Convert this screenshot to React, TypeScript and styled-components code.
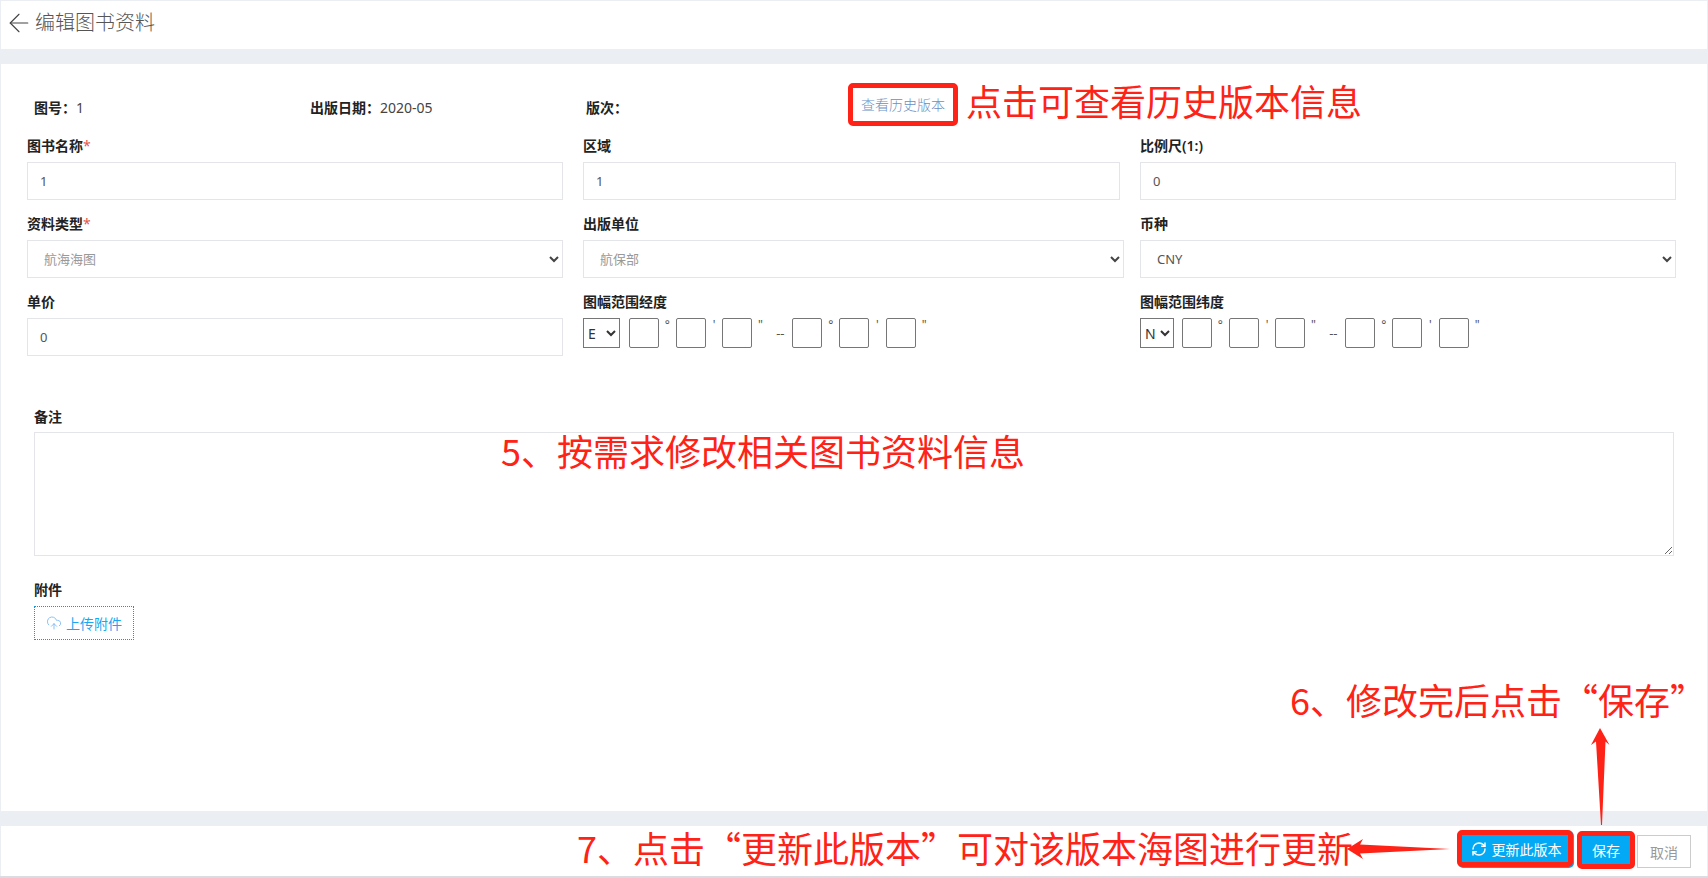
import React, { FC } from "react";
import styled, { createGlobalStyle } from "styled-components";
import { ArrowLeft, CloudUpload, RefreshCw } from "lucide-react";

const GlobalStyle = createGlobalStyle`
  html, body {
    margin: 0;
    padding: 0;
    background: #ebeef3;
  }
  * {
    box-sizing: border-box;
  }
`;

const FONT = `"Noto Sans", "Noto Sans CJK SC", sans-serif`;
const RED = "#ff2216";
const BLUE = "#03a9f4";

const CoordGroup: FC<{ hemi: string; selectWidth: number; selectGap: number }> = ({
  hemi,
  selectWidth,
  selectGap,
}) => (
  <CoordRow>
    <CoordSelect defaultValue={hemi} $width={selectWidth} $gap={selectGap}>
      <option>{hemi}</option>
    </CoordSelect>
    <CoordInput />
    <Unit>°</Unit>
    <CoordInput />
    <Unit>'</Unit>
    <CoordInput />
    <Second>"</Second>
    <Dash>--</Dash>
    <CoordInput />
    <Unit>°</Unit>
    <CoordInput />
    <Unit>'</Unit>
    <CoordInput />
    <Unit>"</Unit>
  </CoordRow>
);

const App: FC = () => (
  <Page>
    <GlobalStyle />
    <Header>
      <ArrowLeft size={30} strokeWidth={0.9} color="#444" />
      <Title>编辑图书资料</Title>
    </Header>

    <Card>
      <InfoRow>
        <Info>
          <b>图号：</b>1
        </Info>
        <Info>
          <b>出版日期：</b>2020-05
        </Info>
        <Info>
          <b>版次：</b>
        </Info>
        <HistoryLink>查看历史版本</HistoryLink>
      </InfoRow>

      <FormGrid>
        <Field>
          <Label>
            图书名称<Star>*</Star>
          </Label>
          <TextInput defaultValue="1" />
        </Field>
        <Field>
          <Label>区域</Label>
          <TextInput defaultValue="1" />
        </Field>
        <Field>
          <Label>比例尺(1:)</Label>
          <TextInput defaultValue="0" />
        </Field>

        <Field>
          <Label>
            资料类型<Star>*</Star>
          </Label>
          <Select $muted>
            <option>航海海图</option>
          </Select>
        </Field>
        <Field>
          <Label>出版单位</Label>
          <Select $muted $overhang>
            <option>航保部</option>
          </Select>
        </Field>
        <Field>
          <Label>币种</Label>
          <Select>
            <option>CNY</option>
          </Select>
        </Field>

        <Field>
          <Label>单价</Label>
          <TextInput defaultValue="0" />
        </Field>
        <Field>
          <Label>图幅范围经度</Label>
          <CoordGroup hemi="E" selectWidth={37} selectGap={9} />
        </Field>
        <Field>
          <Label>图幅范围纬度</Label>
          <CoordGroup hemi="N" selectWidth={34} selectGap={8} />
        </Field>
      </FormGrid>

      <NoteSection>
        <Label>备注</Label>
        <NoteArea />
      </NoteSection>

      <AttachSection>
        <AttachLabel>附件</AttachLabel>
        <UploadButton>
          <CloudUpload size={16} strokeWidth={1.2} color="#6fb1f5" />
          上传附件
        </UploadButton>
      </AttachSection>
    </Card>

    <Footer>
      <UpdateButton>
        <RefreshCw size={16} strokeWidth={2.2} />
        更新此版本
      </UpdateButton>
      <SaveButton>保存</SaveButton>
      <CancelButton>取消</CancelButton>
    </Footer>

    <NoteHistory>点击可查看历史版本信息</NoteHistory>
    <NoteEdit>5、按需求修改相关图书资料信息</NoteEdit>
    <NoteSave>6、修改完后点击“保存”</NoteSave>
    <NoteUpdate>7、点击“更新此版本”可对该版本海图进行更新</NoteUpdate>

    <UpArrow width="24" height="100" viewBox="0 0 24 100">
      <polygon points="11,0 20.5,17 16.5,13.5 13,97 12,97 7,13.5 2,17" fill={RED} />
    </UpArrow>
    <LeftArrow width="106" height="24" viewBox="0 0 106 24">
      <polygon points="0,12 16,2 13,7.5 103,12 13,16.5 16,22" fill={RED} />
    </LeftArrow>
  </Page>
);

const Page = styled.div`
  position: relative;
  width: 1708px;
  height: 878px;
  padding: 1px 1px 2px;
  display: flex;
  flex-direction: column;
  overflow: hidden;
  font-family: ${FONT};
  font-size: 13px;
  color: #333;
  background: #ebeef3;
  border-bottom: 2px solid #d9dde1;
`;

const Header = styled.header`
  height: 48px;
  flex: none;
  display: flex;
  align-items: center;
  padding: 0 0 4px 3px;
  background: #fff;
`;

const Title = styled.h1`
  margin: 0 0 0 1px;
  font-size: 20px;
  font-weight: 300;
  line-height: 1;
  color: #555;
`;

const Card = styled.main`
  height: 747px;
  flex: none;
  margin-top: 15px;
  padding: 32px 31px 0 26px;
  background: #fff;
`;

const InfoRow = styled.div`
  height: 22px;
  padding-left: 7px;
  display: grid;
  grid-template-columns: 276px 276px 262px auto;
  grid-auto-rows: 22px;
  align-items: center;
  justify-content: start;
`;

const Info = styled.div`
  font-size: 14px;
  color: #444;

  b {
    font-weight: 600;
    color: #222;
  }
`;

const HistoryLink = styled.a`
  width: 110px;
  height: 43px;
  margin-bottom: 6px;
  display: flex;
  align-items: center;
  justify-content: center;
  font-size: 14px;
  font-weight: 300;
  color: #6a90c2;
  border: 5px solid ${RED};
  border-radius: 5px;
`;

const FormGrid = styled.div`
  margin-top: 17px;
  display: grid;
  grid-template-columns: 536px 537px 536px;
  column-gap: 20px;
  row-gap: 13px;
`;

const Field = styled.div`
  display: flex;
  flex-direction: column;
  min-width: 0;
`;

const Label = styled.label`
  height: 22px;
  margin-bottom: 5px;
  line-height: 22px;
  font-size: 14px;
  font-weight: 600;
  color: #222;
`;

const Star = styled.span`
  color: #e2574c;
  font-weight: 400;
`;

const TextInput = styled.input`
  width: 100%;
  height: 38px;
  padding: 0 12px;
  border: 1px solid #e3e5e8;
  outline: none;
  font-family: ${FONT};
  font-size: 13px;
  color: #555;
  background: #fff;
`;

const Select = styled.select<{ $muted?: boolean; $overhang?: boolean }>`
  width: ${(p) => (p.$overhang ? "541px" : "100%")};
  height: 38px;
  padding: 0 12px;
  border: 1px solid #e3e5e8;
  outline: none;
  font-family: ${FONT};
  font-size: 13px;
  color: #444;
  -webkit-text-fill-color: ${(p) => (p.$muted ? "#999" : "#555")};
  background: #fff;
`;

const CoordRow = styled.div`
  display: flex;
  align-items: flex-start;
  height: 38px;
`;

const CoordSelect = styled.select<{ $width: number; $gap: number }>`
  width: ${(p) => p.$width}px;
  height: 30px;
  margin-right: ${(p) => p.$gap}px;
  padding: 0;
  border: 1px solid #767676;
  border-radius: 0;
  font-family: ${FONT};
  font-size: 14px;
  color: #333;
  background: #fff;
`;

const CoordInput = styled.input`
  width: 30px;
  height: 30px;
  padding: 0;
  border: 1px solid #767676;
  border-radius: 2px;
  outline: none;
  background: #fff;
`;

const Unit = styled.span`
  width: 16.7px;
  text-align: center;
  font-size: 12px;
  line-height: 14px;
  color: #555;
`;

const Second = styled(Unit)`
  width: 16px;
`;

const Dash = styled.span`
  width: 24px;
  margin-top: 6px;
  text-align: center;
  font-size: 13px;
  line-height: 18px;
  color: #555;
`;

const NoteSection = styled.section`
  margin-top: 50px;
  padding-left: 7px;
  display: flex;
  flex-direction: column;
`;

const NoteArea = styled.textarea`
  width: 1640px;
  height: 124px;
  margin-top: -1px;
  border: 1px solid #e3e5e8;
  outline: none;
  background: #fff;
`;

const AttachSection = styled.section`
  margin-top: 23px;
  padding-left: 7px;
  display: flex;
  flex-direction: column;
  align-items: flex-start;
`;

const AttachLabel = styled(Label)`
  margin-bottom: 5px;
`;

const UploadButton = styled.button`
  width: 100px;
  height: 34px;
  display: flex;
  align-items: center;
  justify-content: center;
  gap: 4px;
  padding: 0;
  border: 1px dotted #0f96dc;
  font-family: ${FONT};
  font-size: 14px;
  color: #1aa7f2;
  background: #fff;
`;

const Footer = styled.footer`
  height: 50px;
  flex: none;
  margin-top: 15px;
  padding: 0 16px 8px 0;
  display: flex;
  align-items: flex-end;
  justify-content: flex-end;
  background: #fff;
`;

const ActionButton = styled.button`
  display: flex;
  align-items: center;
  justify-content: center;
  padding: 0;
  font-family: ${FONT};
  font-size: 14px;
  color: #fff;
  background: ${BLUE};
  border: 5px solid ${RED};
  border-radius: 5px;
`;

const UpdateButton = styled(ActionButton)`
  width: 116px;
  height: 37px;
  gap: 5px;
  padding-left: 2px;
  margin-bottom: 1px;
  box-shadow: 1px 1px 0 ${BLUE};
`;

const SaveButton = styled(ActionButton)`
  width: 58px;
  height: 38px;
  margin-left: 4px;
  margin-bottom: -1px;
`;

const CancelButton = styled.button`
  width: 54px;
  height: 33px;
  margin-left: 2px;
  padding: 0;
  font-family: ${FONT};
  font-size: 14px;
  color: #999;
  background: #fff;
  border: 1px solid #ccc;
`;

const Annotation = styled.div`
  position: absolute;
  font-family: "Noto Sans CJK SC", sans-serif;
  font-size: 36px;
  line-height: 1;
  white-space: nowrap;
  color: ${RED};
`;

const NoteHistory = styled(Annotation)`
  left: 966px;
  top: 82px;
`;

const NoteEdit = styled(Annotation)`
  left: 501px;
  top: 432px;
`;

const NoteSave = styled(Annotation)`
  left: 1290px;
  top: 681px;
`;

const NoteUpdate = styled(Annotation)`
  left: 577px;
  top: 829px;
`;

const UpArrow = styled.svg`
  position: absolute;
  left: 1589px;
  top: 728px;
`;

const LeftArrow = styled.svg`
  position: absolute;
  left: 1347px;
  top: 837px;
`;

export default App;
